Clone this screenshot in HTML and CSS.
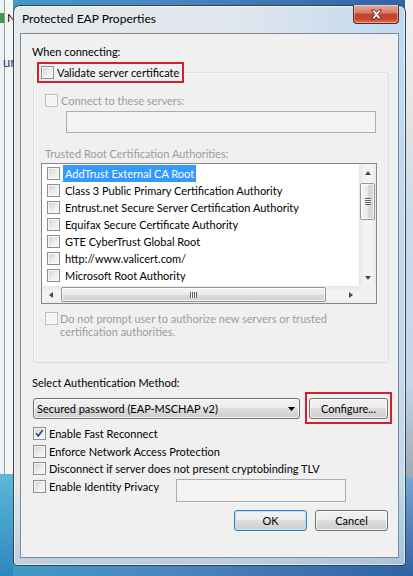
FILE: index.html
```html
<!DOCTYPE html>
<html lang="en">
<head>
    <meta charset="UTF-8">
    <meta name="viewport" content="width=device-width, initial-scale=1.0">
    <title>Protected EAP Properties</title>
    <link rel="stylesheet" href="styles.css">
</head>
<body>
    <div class="desktop">
        <span class="bg-icon"></span>
        <span class="bg-title">N</span>
        <span class="bg-text">ur</span>

        <div class="window">
            <div class="titlebar">Protected EAP Properties</div>
            <div class="close-btn">
                <svg width="13" height="11" viewBox="0 0 13 11">
                    <path d="M1.5 1 L4.5 1 L6.5 3.3 L8.5 1 L11.5 1 L8.2 5.5 L11.5 10 L8.5 10 L6.5 7.7 L4.5 10 L1.5 10 L4.8 5.5 Z" fill="#fff" stroke="#5a2018" stroke-width="0.9"/>
                </svg>
            </div>

            <div class="client">
                <div class="label connecting">When connecting:</div>

                <fieldset class="group">
                    <legend class="mark-box legend-box"><span class="cb"></span>Validate server certificate</legend>

                    <div class="check-row disabled servers-row"><span class="cb cb-off"></span>Connect to these servers:</div>
                    <div class="textbox servers-box"></div>

                    <div class="label disabled trusted">Trusted Root Certification Authorities:</div>

                    <div class="listbox">
                        <div class="list-items">
                            <div class="item"><span class="cb"></span><span class="item-text selected">AddTrust External CA Root</span></div>
                            <div class="item"><span class="cb"></span><span class="item-text">Class 3 Public Primary Certification Authority</span></div>
                            <div class="item"><span class="cb"></span><span class="item-text">Entrust.net Secure Server Certification Authority</span></div>
                            <div class="item"><span class="cb"></span><span class="item-text">Equifax Secure Certificate Authority</span></div>
                            <div class="item"><span class="cb"></span><span class="item-text">GTE CyberTrust Global Root</span></div>
                            <div class="item"><span class="cb"></span><span class="item-text">http://www.valicert.com/</span></div>
                            <div class="item"><span class="cb"></span><span class="item-text">Microsoft Root Authority</span></div>
                        </div>
                        <div class="vscroll">
                            <div class="sb-btn"><span class="arrow up"></span></div>
                            <div class="sb-track"><div class="thumb thumb-v"><span class="grip-v"></span></div></div>
                            <div class="sb-btn"><span class="arrow down"></span></div>
                        </div>
                        <div class="hscroll">
                            <div class="sb-btn"><span class="arrow left"></span></div>
                            <div class="sb-track"><div class="thumb thumb-h"><span class="grip-h"></span></div></div>
                            <div class="sb-btn"><span class="arrow right"></span></div>
                        </div>
                        <div class="sb-corner"></div>
                    </div>

                    <div class="check-row disabled prompt-row">
                        <span class="cb cb-off"></span>
                        <span>Do not prompt user to authorize new servers or trusted<br>certification authorities.</span>
                    </div>
                </fieldset>

                <div class="label method-label">Select Authentication Method:</div>
                <div class="method-row">
                    <div class="combo">
                        <span>Secured password (EAP-MSCHAP v2)</span>
                        <svg width="7" height="4" viewBox="0 0 7 4"><polygon points="0,0 7,0 3.5,4" fill="#000"/></svg>
                    </div>
                    <div class="mark-box configure-box">
                        <button class="btn configure">Configure...</button>
                    </div>
                </div>

                <div class="options">
                    <div class="check-row opt">
                        <span class="cb cb-checked">
                            <svg width="11" height="11" viewBox="0 0 11 11"><path d="M2 5.2 L4.3 7.8 L8.8 2" fill="none" stroke="#2a4f8c" stroke-width="1.7"/></svg>
                        </span>Enable Fast Reconnect
                    </div>
                    <div class="check-row opt"><span class="cb"></span>Enforce Network Access Protection</div>
                    <div class="check-row opt"><span class="cb"></span>Disconnect if server does not present cryptobinding TLV</div>
                    <div class="check-row opt">
                        <span class="cb"></span><span class="id-label">Enable Identity Privacy</span>
                        <div class="textbox identity-box"></div>
                    </div>
                </div>

                <div class="buttons">
                    <button class="btn btn-default">OK</button>
                    <button class="btn">Cancel</button>
                </div>
            </div>
        </div>
    </div>
</body>
</html>
```

FILE: styles.css
```css
* {
    box-sizing: border-box;
}
body {
    margin: 0;
    width: 413px;
    height: 576px;
    overflow: hidden;
    font-family: Lato, "Noto Sans", sans-serif;
    font-size: 11px;
    color: #000;
    background:
        linear-gradient(#5cbad6, #2f86bd) 0 474px / 13px 102px no-repeat,
        linear-gradient(to right, #eef1f4 4px, #8f9cad 4px, #8f9cad 5px, #f5f5f5 5px) 0 0 / 13px 474px no-repeat,
        linear-gradient(#76a6d3, #2e62a2) 405px 478px / 8px 98px no-repeat,
        linear-gradient(#f2f2f2, #e2e4e6 25%, #c9dbeb 45%, #c3d7ea 80%, #9fa8b2 100%) 405px 0 / 8px 478px no-repeat,
        linear-gradient(to right, #3d9cc8, #4c86bf 40%, #2f63a3);
}
.desktop {
    position: relative;
    padding: 5px 0 0 13px;
}
.bg-icon {
    position: absolute;
    left: 0;
    top: 13px;
    width: 4px;
    height: 10px;
    background: #3e9a48;
}
.bg-title {
    position: absolute;
    left: 7px;
    top: 10px;
    font-size: 12px;
}
.bg-text {
    position: absolute;
    left: 3px;
    top: 54px;
    color: #2a3f8a;
    font-size: 13px;
}
.window {
    position: relative;
    width: 393px;
    height: 561px;
    padding: 0 6px 7px;
    display: flex;
    flex-direction: column;
    border: 1px solid #38444f;
    border-radius: 7px 7px 4px 4px;
    background:
        linear-gradient(to bottom, rgba(255,255,255,0) 85%, rgba(110,155,200,0.35)),
        linear-gradient(to right, #e6e9ec, #e1e7ee 55%, #c1d8ee);
    box-shadow: inset 0 0 0 1px rgba(255,255,255,0.6);
}
.titlebar {
    height: 27px;
    padding: 0 0 3px 2px;
    display: flex;
    align-items: center;
    line-height: 15px;
    font-size: 12px;
}
.close-btn {
    position: absolute;
    top: -1px;
    right: 6px;
    width: 46px;
    height: 19px;
    display: flex;
    align-items: center;
    justify-content: center;
    border: 1px solid #5b2a22;
    border-top: none;
    border-radius: 0 0 4px 4px;
    background: linear-gradient(#e9a99b, #d47a69 45%, #c2412c 50%, #c8482f 80%, #de7a5c);
    box-shadow: inset 0 0 0 1px rgba(255,255,255,0.35);
}
.client {
    flex: 1;
    border: 1px solid #7d8a98;
    background: #f0f0f0;
    padding-top: 10px;
}
.label {
    height: 16px;
    line-height: 16px;
}
.connecting {
    margin-left: 11px;
}
.disabled {
    color: #9c9c9c;
}

/* checkboxes */
.cb {
    display: inline-block;
    flex: none;
    width: 13px;
    height: 13px;
    border: 1px solid #8e8f8f;
    background: linear-gradient(135deg, #cdd0d3, #eceded 55%, #fbfbfb);
    box-shadow: inset 0 0 0 1px #f6f6f6;
}
.cb-off {
    border-color: #bdbdbd;
    background: #f4f4f4;
    box-shadow: inset 0 0 0 1px #fbfbfb;
}
.cb-checked {
    display: flex;
    align-items: center;
    justify-content: center;
}
.check-row {
    display: flex;
    align-items: center;
    gap: 3px;
}

/* group box */
.group {
    width: 356px;
    margin: 2px 0 0 12px;
    padding: 0 0 24px;
    border: 1px solid #d5dfe5;
    border-radius: 3px;
    box-shadow: inset 1px 1px 0 #fafafa;
}
.mark-box {
    border: 2px solid #d2202c;
}
.legend-box {
    margin-left: 3px;
    padding: 0 3px 0 2px;
    display: flex;
    align-items: center;
    gap: 3px;
    height: 21px;
    line-height: 17px;
}
.servers-row {
    margin: 10px 0 0 11px;
    height: 15px;
}
.textbox {
    border: 1px solid #adadad;
    background: #f3f3f3;
    height: 22px;
}
.servers-box {
    margin: 3px 0 0 32px;
    width: 310px;
}
.trusted {
    margin: 13px 0 0 11px;
}
.listbox {
    margin: 1px 0 0 7px;
    width: 336px;
    height: 141px;
    border: 1px solid #828790;
    background: #fff;
    display: grid;
    grid-template-columns: 1fr 17px;
    grid-template-rows: 1fr 17px;
}
.list-items {
    padding-top: 1px;
    overflow: hidden;
}
.item {
    display: flex;
    align-items: center;
    height: 17px;
    padding-left: 5px;
    gap: 3px;
    white-space: nowrap;
}
.item-text {
    padding: 0 2px;
    line-height: 17px;
}
.selected {
    background: #3399ff;
    color: #fff;
}

/* scrollbars */
.vscroll,
.hscroll {
    display: flex;
    background: #f0f0f0;
}
.vscroll {
    flex-direction: column;
    background: linear-gradient(to right, #e6e6e6, #f3f3f3 30%, #f3f3f3 75%, #e9e9e9);
}
.hscroll {
    background: linear-gradient(#e6e6e6, #f3f3f3 30%, #f3f3f3 75%, #e9e9e9);
}
.sb-btn {
    width: 17px;
    height: 17px;
    flex: none;
    display: flex;
    align-items: center;
    justify-content: center;
}
.sb-track {
    flex: 1;
    display: flex;
}
.vscroll .sb-track {
    flex-direction: column;
}
.sb-corner {
    background: #f0f0f0;
}
.arrow {
    width: 0;
    height: 0;
    border: 0 solid transparent;
}
.arrow.up {
    border-width: 0 3.5px 4px;
    border-bottom-color: #4a4a4a;
}
.arrow.down {
    border-width: 4px 3.5px 0;
    border-top-color: #4a4a4a;
}
.arrow.left {
    border-width: 3.5px 4px 3.5px 0;
    border-right-color: #4a4a4a;
}
.arrow.right {
    border-width: 3.5px 0 3.5px 4px;
    border-left-color: #4a4a4a;
}
.thumb {
    border: 1px solid #979797;
    border-radius: 2px;
    display: flex;
    align-items: center;
    justify-content: center;
    box-shadow: inset 0 0 0 1px rgba(255,255,255,0.7);
}
.thumb-v {
    margin: 2px 1px 0;
    height: 37px;
    background: linear-gradient(to right, #f4f4f4, #e9e9e9 50%, #d9d9d9 51%, #d4d4d4);
}
.thumb-h {
    margin: 1px 0 1px 2px;
    width: 265px;
    background: linear-gradient(#f4f4f4, #e9e9e9 50%, #d9d9d9 51%, #d4d4d4);
}
.grip-v {
    width: 6px;
    height: 7px;
    background: repeating-linear-gradient(#5f5f5f 0 1px, #f7f7f7 1px 2px);
}
.grip-h {
    width: 7px;
    height: 6px;
    background: repeating-linear-gradient(to right, #5f5f5f 0 1px, #f7f7f7 1px 2px);
}

.prompt-row {
    margin: 8px 0 0 11px;
    align-items: flex-start;
    gap: 2px;
    line-height: 13px;
}

/* authentication method */
.method-label {
    margin: 12px 0 0 11px;
}
.method-row {
    display: flex;
    align-items: flex-start;
    margin-top: 1px;
}
.combo {
    margin: 6px 0 0 12px;
    width: 267px;
    height: 21px;
    padding: 0 4px 0 3px;
    display: flex;
    align-items: center;
    justify-content: space-between;
    border: 1px solid #707070;
    border-radius: 3px;
    background: linear-gradient(#f2f2f2, #ebebeb 50%, #dddddd 50%, #cfcfcf);
    box-shadow: inset 0 0 0 1px rgba(255,255,255,0.75);
}
.configure-box {
    margin-left: 5px;
    padding: 4px 2px 3px;
}
.btn {
    height: 21px;
    padding: 0;
    font: inherit;
    color: #000;
    border: 1px solid #707070;
    border-radius: 3px;
    background: linear-gradient(#f2f2f2, #ebebeb 50%, #dddddd 50%, #cfcfcf);
    box-shadow: inset 0 0 0 1px rgba(255,255,255,0.75);
}
.configure {
    display: block;
    width: 79px;
}
.btn-default {
    border-color: #3c7fb1;
    box-shadow: inset 0 0 0 1px #b4e3f8;
}

/* options */
.options {
    margin: 1px 0 0 12px;
}
.opt {
    height: 17.5px;
}
.id-label {
    width: 124px;
}
.identity-box {
    align-self: flex-start;
    margin-top: 1px;
    width: 170px;
    height: 23px;
    flex: none;
}
.buttons {
    display: flex;
    justify-content: flex-end;
    gap: 8px;
    margin-top: 15px;
    padding-right: 10px;
}
.buttons .btn {
    width: 73px;
}
```
